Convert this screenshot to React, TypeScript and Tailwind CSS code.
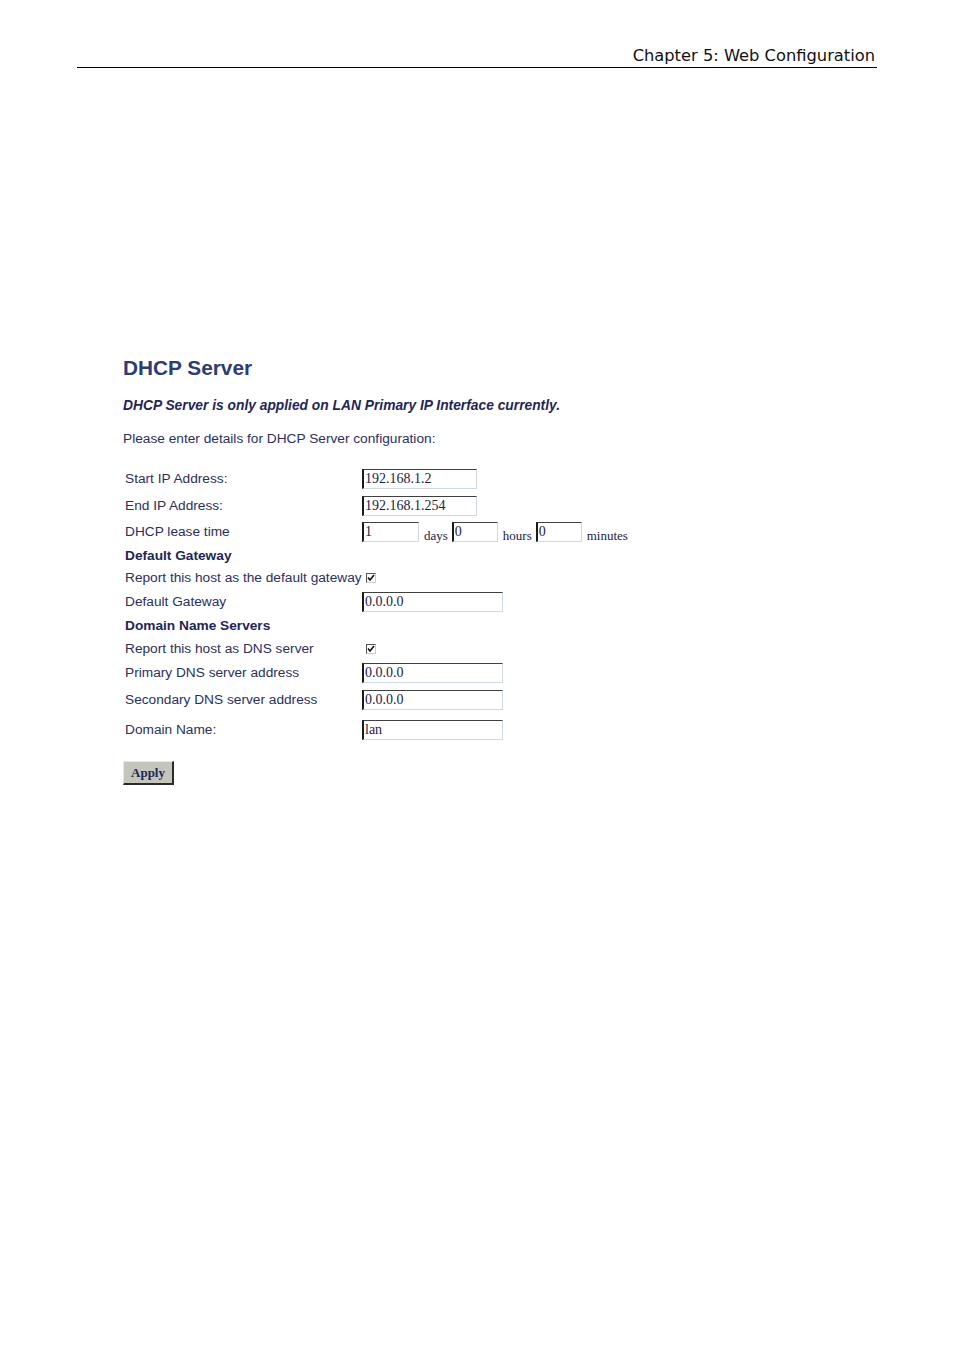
import React from 'react';

const sans = "font-['Liberation_Sans',Arial,sans-serif]";
const serif = "font-['Liberation_Serif','Times_New_Roman',serif]";

function Field({ value, w }: { value: string; w: string }) {
  return (
    <div
      className={`${w} h-[20px] bg-white border-l-2 border-t border-l-[#1a1a1a] border-t-[#404040] border-r border-b border-r-[#cfd8e6] border-b-[#cfd8e6] flex items-center pl-[1px] ${serif} text-[14px] text-[#1c2148] leading-none`}
    >
      {value}
    </div>
  );
}

function Check() {
  return (
    <div className="w-[10px] h-[10px] ml-[4px] border border-[#555] border-r-[#ccc] border-b-[#ccc] bg-white flex items-center justify-center">
      <svg width="8" height="8" viewBox="0 0 8 8">
        <path d="M1 3.5 L3 6 L7 1" fill="none" stroke="#111" strokeWidth="1.6" />
      </svg>
    </div>
  );
}

function Row({ h, label, bold, children }: { h: string; label: string; bold?: boolean; children?: React.ReactNode }) {
  return (
    <div className={`flex items-center ${h}`}>
      <div
        className={`w-[239px] pl-[2px] whitespace-nowrap text-[13.7px] leading-none ${bold ? 'font-bold text-[#1e2656]' : 'text-[#2a3060]'}`}
      >
        {label}
      </div>
      {children}
    </div>
  );
}

export default function App() {
  return (
    <div className={`w-[954px] h-[1351px] bg-white ${sans}`}>
      <div className="pt-[46px] px-[77px]">
        <div className="flex justify-end pr-[2px] pb-[1px] border-b border-black">
          <span className="font-['DejaVu_Sans',Verdana,sans-serif] text-[16.3px] leading-[20px] text-[#111]">
            Chapter 5: Web Configuration
          </span>
        </div>
      </div>

      <div className="pl-[123px] pt-[287px]">
        <h1 className="text-[20.8px] font-bold leading-[26px] text-[#2b3c77]">DHCP Server</h1>
        <p className="mt-[16px] text-[13.8px] italic font-bold leading-[18px] text-[#1e2656]">
          DHCP Server is only applied on LAN Primary IP Interface currently.
        </p>
        <p className="mt-[15px] text-[13.7px] leading-[18px] text-[#2a3060]">
          Please enter details for DHCP Server configuration:
        </p>

        <div className="mt-[17px]">
          <Row h="h-[27px]" label="Start IP Address:">
            <Field value="192.168.1.2" w="w-[115px]" />
          </Row>
          <Row h="h-[27px]" label="End IP Address:">
            <Field value="192.168.1.254" w="w-[115px]" />
          </Row>
          <Row h="h-[26px]" label="DHCP lease time">
            <Field value="1" w="w-[57px]" />
            <span className={`${serif} text-[13px] text-[#1c2148] ml-[5px] mr-[4px] mt-[7px]`}>days</span>
            <Field value="0" w="w-[46px]" />
            <span className={`${serif} text-[13px] text-[#1c2148] ml-[5px] mr-[4px] mt-[7px]`}>hours</span>
            <Field value="0" w="w-[46px]" />
            <span className={`${serif} text-[13px] text-[#1c2148] ml-[5px] mt-[7px]`}>minutes</span>
          </Row>
          <Row h="h-[22px]" label="Default Gateway" bold />
          <Row h="h-[22px]" label="Report this host as the default gateway">
            <Check />
          </Row>
          <Row h="h-[25px]" label="Default Gateway">
            <Field value="0.0.0.0" w="w-[141px]" />
          </Row>
          <Row h="h-[23px]" label="Domain Name Servers" bold />
          <Row h="h-[23px]" label="Report this host as DNS server">
            <Check />
          </Row>
          <Row h="h-[25px]" label="Primary DNS server address">
            <Field value="0.0.0.0" w="w-[141px]" />
          </Row>
          <Row h="h-[29px]" label="Secondary DNS server address">
            <Field value="0.0.0.0" w="w-[141px]" />
          </Row>
          <Row h="h-[32px]" label="Domain Name:">
            <Field value="lan" w="w-[141px]" />
          </Row>
        </div>

        <button
          type="button"
          className={`mt-[15px] w-[51px] h-[24px] bg-[#c4c6bc] border-t border-l border-t-[#e8e8e0] border-l-[#e8e8e0] border-r-2 border-b-2 border-r-[#2a2a2a] border-b-[#2a2a2a] ${serif} font-bold text-[13px] text-[#1e2656] leading-none`}
        >
          Apply
        </button>
      </div>
    </div>
  );
}
